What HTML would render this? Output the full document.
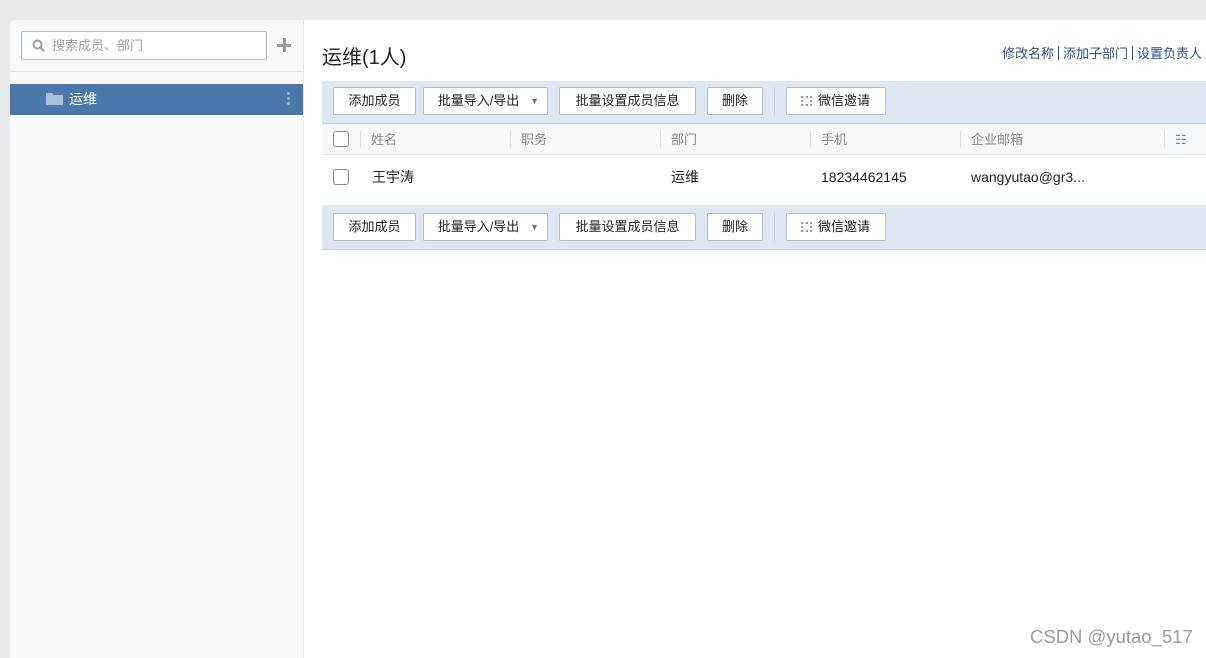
<!DOCTYPE html>
<html><head><meta charset="utf-8"><style>
*{box-sizing:border-box;margin:0;padding:0}
body{width:1206px;height:658px;background:#e9eaec;font-family:"Liberation Sans","Noto Sans CJK SC",sans-serif;font-size:13px;color:#222;position:relative;overflow:hidden}
.abs{position:absolute}
#side{left:10px;top:20px;width:294px;height:638px;background:#f7f8fa;border-right:1px solid #e4e6ea;border-top-left-radius:5px}
#main{left:304px;top:20px;width:902px;height:638px;background:#fff}
.search{left:11px;top:11px;width:246px;height:29px;border:1px solid #b8bec8;border-radius:2px;background:#fff;color:#9aa0a8;font-size:13px;padding-left:30px;line-height:27px}
.bar{left:18px;width:884px;background:#dfe7f2;border-bottom:1px solid #c6d1e0}
.btn{position:absolute;top:6px;height:28px;border:1px solid #b6bcc4;border-radius:2px;background:#fff;text-align:center;line-height:26px;font-size:13px;color:#222}
.hd{left:18px;top:104px;width:884px;height:31px;background:#f7f8fa;border-bottom:1px solid #e2e5ea;color:#888}
.cb{position:absolute;width:16px;height:16px;border:1px solid #888;border-radius:3px;background:#fff}
.col{position:absolute;top:7px;height:17px;border-left:1px solid #e0e3e8;padding-left:10px;line-height:17px}
.sep{display:inline-block;width:1px;height:14px;background:#2a4f7f;margin:0 4px;vertical-align:-2px}
</style></head><body>
<div id="side" class="abs">
 <div class="abs search">搜索成员、部门
  <svg class="abs" style="left:10px;top:7px" width="14" height="14" viewBox="0 0 14 14"><circle cx="5.5" cy="5.5" r="4" fill="none" stroke="#9aa0a8" stroke-width="2"/><path d="M8.5 8.5l3.5 3.5" stroke="#9aa0a8" stroke-width="2.4"/></svg>
 </div>
 <div class="abs" style="left:267px;top:24px;width:14px;height:3px;background:#999"></div>
 <div class="abs" style="left:272.5px;top:18px;width:3px;height:14px;background:#999"></div>
 <div class="abs" style="left:0;top:51px;width:293px;height:1px;background:#e0e3e8"></div>
 <div class="abs" style="left:0;top:64px;width:293px;height:31px;background:#4a78ab;color:#fff;font-size:14px;line-height:31px;padding-left:59px">运维
  <svg class="abs" style="left:36px;top:9px" width="17" height="12" viewBox="0 0 17 12"><path d="M0 0h6l1.5 2H17v10H0z" fill="#aac1dc"/></svg>
  <div class="abs" style="left:277px;top:8px;width:3px;height:3px;background:#9fb6d2;border-radius:50%;box-shadow:0 5px 0 #9fb6d2,0 10px 0 #9fb6d2"></div>
 </div>
</div>
<div id="main" class="abs">
 <div class="abs" style="left:18px;top:21px;font-size:20px;color:#222">运维(1人)</div>
 <div class="abs" style="right:4px;top:23px;font-size:13px;color:#2a4f7f;white-space:nowrap">修改名称<span class="sep"></span>添加子部门<span class="sep"></span>设置负责人</div>
 <div class="abs bar" style="top:61px;height:43px">
  <div class="btn" style="left:11px;width:83px">添加成员</div>
  <div class="btn" style="left:101px;width:125px;padding-right:14px">批量导入/导出<span style="position:absolute;right:8px;font-size:9px;color:#777">▼</span></div>
  <div class="btn" style="left:237px;width:137px">批量设置成员信息</div>
  <div class="btn" style="left:385px;width:56px">删除</div>
  <div class="abs" style="left:452px;top:6px;width:1px;height:28px;background:#c6d1e0"></div>
  <div class="btn" style="left:464px;width:100px;padding-left:16px"><span style="position:absolute;left:14px;top:8px;width:11px;height:10px;border:2px dotted #999"></span>微信邀请</div>
 </div>
 <div class="abs hd">
  <div class="cb" style="left:11px;top:7px"></div>
  <div class="col" style="left:38px">姓名</div>
  <div class="col" style="left:188px">职务</div>
  <div class="col" style="left:338px">部门</div>
  <div class="col" style="left:488px">手机</div>
  <div class="col" style="left:638px">企业邮箱</div>
  <div class="col" style="left:842px;color:#6a85aa">☷</div>
 </div>
 <div class="abs" style="left:18px;top:135px;width:884px;height:50px;font-size:14px;line-height:44px">
  <div class="cb" style="left:11px;top:14px"></div>
  <div class="abs" style="left:50px">王宇涛</div>
  <div class="abs" style="left:349px">运维</div>
  <div class="abs" style="left:499px">18234462145</div>
  <div class="abs" style="left:649px">wangyutao@gr3...</div>
 </div>
 <div class="abs bar" style="top:185px;height:45px">
  <div class="btn" style="left:11px;width:83px;top:8px">添加成员</div>
  <div class="btn" style="left:101px;width:125px;padding-right:14px;top:8px">批量导入/导出<span style="position:absolute;right:8px;font-size:9px;color:#777">▼</span></div>
  <div class="btn" style="left:237px;width:137px;top:8px">批量设置成员信息</div>
  <div class="btn" style="left:385px;width:56px;top:8px">删除</div>
  <div class="abs" style="left:452px;top:8px;width:1px;height:28px;background:#c6d1e0"></div>
  <div class="btn" style="left:464px;width:100px;padding-left:16px;top:8px"><span style="position:absolute;left:14px;top:8px;width:11px;height:10px;border:2px dotted #999"></span>微信邀请</div>
 </div>
</div>
<div class="abs" style="left:1030px;top:626px;font-size:18.5px;color:#999">CSDN @yutao_517</div>
</body></html>
